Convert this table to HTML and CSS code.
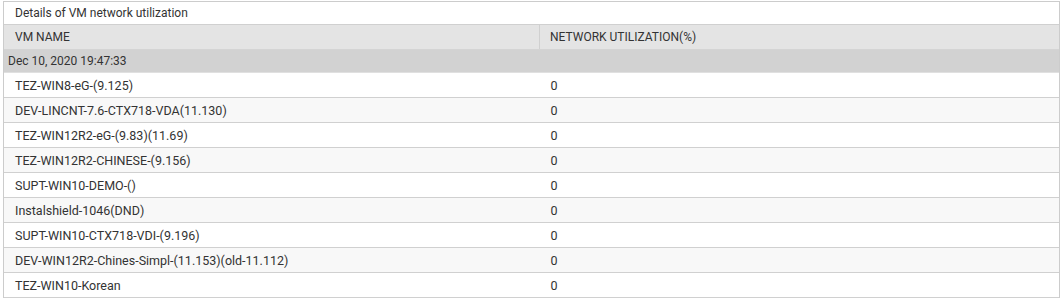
FILE: index.html
```html
<!DOCTYPE html>
<html>
<head>
<meta charset="utf-8">
<link rel="stylesheet" href="styles.css">
</head>
<body>
<div class="panel">
  <div class="title">Details of VM network utilization</div>
  <table class="grid">
    <thead>
      <tr class="head"><th class="c1">VM NAME</th><th class="c2">NETWORK UTILIZATION(%)</th></tr>
    </thead>
    <tbody>
      <tr class="group"><td colspan="2">Dec 10, 2020 19:47:33</td></tr>
      <tr><td class="c1">TEZ-WIN8-eG-(9.125)</td><td class="c2">0</td></tr>
      <tr class="alt"><td class="c1">DEV-LINCNT-7.6-CTX718-VDA(11.130)</td><td class="c2">0</td></tr>
      <tr><td class="c1">TEZ-WIN12R2-eG-(9.83)(11.69)</td><td class="c2">0</td></tr>
      <tr class="alt"><td class="c1">TEZ-WIN12R2-CHINESE-(9.156)</td><td class="c2">0</td></tr>
      <tr><td class="c1">SUPT-WIN10-DEMO-()</td><td class="c2">0</td></tr>
      <tr class="alt"><td class="c1">Instalshield-1046(DND)</td><td class="c2">0</td></tr>
      <tr><td class="c1">SUPT-WIN10-CTX718-VDI-(9.196)</td><td class="c2">0</td></tr>
      <tr class="alt"><td class="c1">DEV-WIN12R2-Chines-Simpl-(11.153)(old-11.112)</td><td class="c2">0</td></tr>
      <tr><td class="c1">TEZ-WIN10-Korean</td><td class="c2">0</td></tr>
    </tbody>
  </table>
</div>
</body>
</html>
```
FILE: styles.css
```css
html, body {
  margin: 0;
  padding: 0;
  background: #fff;
}
body {
  padding: 1px 4px 0 3px;
  font-family: Roboto, "Liberation Sans", sans-serif;
  font-size: 12px;
  color: #333;
}
.panel {
  border: 1px solid #cccccc;
  border-bottom: none;
  width: 1055px;
}
.title {
  height: 22px;
  line-height: 22px;
  padding-left: 11px;
  border-bottom: 1px solid #d0d0d0;
  color: #333;
}
.grid {
  width: 100%;
  border-collapse: collapse;
  table-layout: fixed;
}
.grid th, .grid td {
  padding: 0;
  text-align: left;
  font-weight: normal;
  white-space: nowrap;
}
.head th {
  background: #e4e4e4;
  height: 24px;
  border-bottom: 1px solid #d4d4d4;
}
.head th.c1 {
  width: 524px;
  padding-left: 11px;
  border-right: 1px solid #d0d0d0;
}
.head th.c2 {
  padding-left: 10px;
}
.group td {
  background: #d2d2d2;
  height: 22px;
  padding-left: 4px;
  border-bottom: 1px solid #e0e0e0;
}
tbody tr td.c1 {
  padding-left: 11px;
  font-size: 12.5px;
}
tbody tr td.c2 {
  padding-left: 11px;
  font-size: 12.5px;
}
tbody tr td {
  height: 24px;
  border-bottom: 1px solid #d0d0d0;
  background: #fff;
}
tbody tr.group td {
  font-size: 12px;
  background: #d2d2d2;
  height: 22px;
  border-bottom: 1px solid #e0e0e0;
}
tbody tr.alt td {
  background: #f8f8f8;
}
```
